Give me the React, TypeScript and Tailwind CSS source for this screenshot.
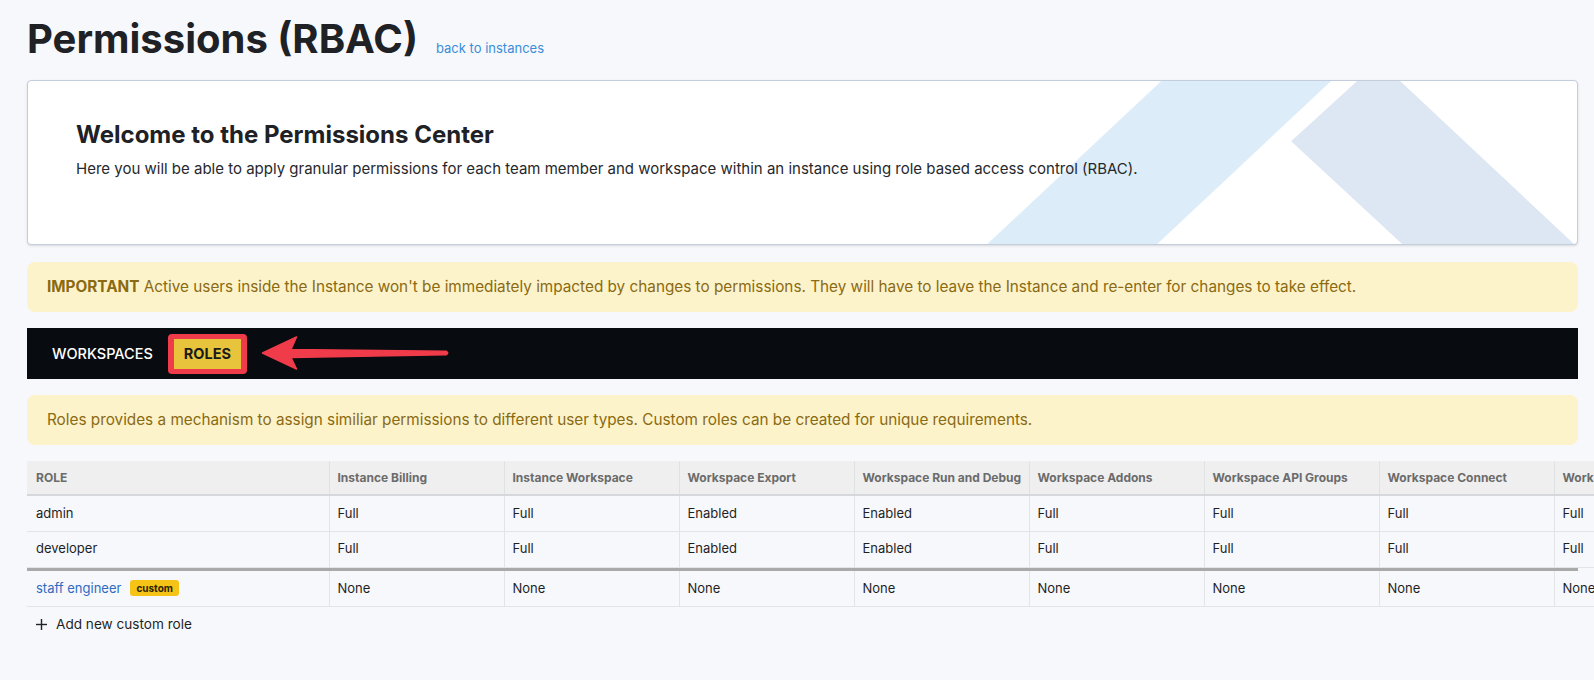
const COLUMNS = [
  'Instance Billing',
  'Instance Workspace',
  'Workspace Export',
  'Workspace Run and Debug',
  'Workspace Addons',
  'Workspace API Groups',
  'Workspace Connect',
  'Workspace Variables',
  'Workspace Settings',
];

interface Role {
  name: string;
  custom?: boolean;
  values: string[];
}

const BUILT_IN: Role[] = [
  { name: 'admin', values: ['Full', 'Full', 'Enabled', 'Enabled', 'Full', 'Full', 'Full', 'Full', 'Full'] },
  { name: 'developer', values: ['Full', 'Full', 'Enabled', 'Enabled', 'Full', 'Full', 'Full', 'Full', 'Full'] },
];

const CUSTOM: Role[] = [
  { name: 'staff engineer', custom: true, values: ['None', 'None', 'None', 'None', 'None', 'None', 'None', 'None', 'None'] },
];

function Cols() {
  return (
    <colgroup>
      <col className="w-[302px]" />
      {COLUMNS.map((c) => (
        <col key={c} className="w-[175px]" />
      ))}
    </colgroup>
  );
}

function RoleRow({ role }: { role: Role }) {
  return (
    <tr className="h-[36px] border-b border-[#e2e4e8]">
      <td className="pl-[9px] pr-2 text-[13px]">
        {role.custom ? (
          <span className="flex items-center gap-[9px]">
            <span className="text-[#2f6bc0]">{role.name}</span>
            <span className="rounded-[3px] bg-[#f6c417] px-[6px] text-[10px] font-bold leading-4 text-[#2a2200]">custom</span>
          </span>
        ) : (
          <span className="text-[#1f1f1f]">{role.name}</span>
        )}
      </td>
      {role.values.map((v, i) => (
        <td key={i} className="whitespace-nowrap border-l border-[#e2e4e8] px-2 text-[13px] text-[#1f1f1f]">
          {v}
        </td>
      ))}
    </tr>
  );
}

export default function App() {
  return (
    <div className="min-h-screen w-full overflow-hidden bg-[#f7f8fc] pl-[27px] pr-[16px] pb-10 font-['Inter',sans-serif] text-[#1f1f1f]">
      <div className="flex items-baseline gap-[18px] pt-[15px]">
        <h1 className="text-[40px] font-bold leading-[48px] text-[#202124]">Permissions (RBAC)</h1>
        <a className="text-[13px] text-[#3a8ed8]">back to instances</a>
      </div>

      <div className="relative mt-[17px] h-[165px] overflow-hidden rounded-[4px] border border-[#c3cddb] bg-white shadow-sm">
        <svg className="absolute inset-0 h-full w-full" viewBox="0 0 1550 165" preserveAspectRatio="none">
          <polygon points="960,165 1130,165 1304,0 1134,0" fill="#dcedf9" />
          <polygon points="1330,0 1373,0 1547,165 1375,165 1264,61" fill="#dde6f3" />
        </svg>
        <div className="relative pl-12 pt-[38px]">
          <h2 className="mb-2 text-[24px] font-bold leading-8 text-[#202124]">Welcome to the Permissions Center</h2>
          <p className="text-[15px] leading-5 text-[#26282c]">
            Here you will be able to apply granular permissions for each team member and workspace within an instance using role based access control (RBAC).
          </p>
        </div>
      </div>

      <div className="mt-[17px] rounded-[8px] bg-[#fdf3cb] px-5 py-[15px] text-[15.3px] leading-5 text-[#8a6a12]">
        <span className="font-bold">IMPORTANT</span> Active users inside the Instance won't be immediately impacted by changes to permissions. They will have to leave the Instance and re-enter for changes to take effect.
      </div>

      <div className="mt-4 flex h-[51px] items-center gap-3 bg-[#080b0f] pl-4">
        <div className="px-[9px] text-[14.5px] font-medium text-white">WORKSPACES</div>
        <div className="relative">
          <div className="flex h-[30px] items-center bg-[#e8c43c] px-[10px] text-[14.5px] font-bold text-[#1a1a1a]">ROLES</div>
          <div className="absolute -inset-x-[6px] -inset-y-[5px] rounded-[4px] border-x-[6px] border-y-[5px] border-[#ef3b4a]" />
          <svg className="absolute left-[83px] top-[-4px] h-[40px] w-[200px]" viewBox="0 0 200 40">
            <path
              d="M5.5 18 L39.5 2 L34 14.5 L189 16.2 Q192.5 18 189 19.8 L34 22.5 L39.5 34 Z"
              fill="#ef3b4a"
              stroke="#ef3b4a"
              strokeWidth="1.5"
              strokeLinejoin="round"
            />
          </svg>
        </div>
      </div>

      <div className="mt-4 rounded-[8px] bg-[#fdf3cb] px-5 py-[15px] text-[15.3px] leading-5 text-[#8a6a12]">
        Roles provides a mechanism to assign similiar permissions to different user types. Custom roles can be created for unique requirements.
      </div>

      <div className="mt-4">
        <table className="w-[1877px] table-fixed border-collapse text-left">
          <Cols />
          <thead>
            <tr className="h-[34px] border-b-2 border-[#d6d7da] bg-[#efefef]">
              <th className="pl-[9px] pr-2 text-[12px] font-bold text-[#6b6b6b]">ROLE</th>
              {COLUMNS.map((c) => (
                <th key={c} className="whitespace-nowrap border-l border-[#e0e1e4] px-2 text-[12px] font-bold text-[#6b6b6b]">
                  {c}
                </th>
              ))}
            </tr>
          </thead>
          <tbody>
            {BUILT_IN.map((r) => (
              <RoleRow key={r.name} role={r} />
            ))}
          </tbody>
        </table>
        <div className="h-[3px] bg-[#a9a9a9]" />
        <table className="w-[1877px] table-fixed border-collapse text-left">
          <Cols />
          <tbody>
            {CUSTOM.map((r) => (
              <RoleRow key={r.name} role={r} />
            ))}
          </tbody>
        </table>
        <button className="mt-[7px] flex items-center gap-[9px] pl-[9px] text-[13.6px] leading-5 text-[#1f1f1f]">
          <svg width="11" height="11" viewBox="0 0 11 11" stroke="#222" strokeWidth="1.4">
            <line x1="5.5" y1="0" x2="5.5" y2="11" />
            <line x1="0" y1="5.5" x2="11" y2="5.5" />
          </svg>
          Add new custom role
        </button>
      </div>
    </div>
  );
}
